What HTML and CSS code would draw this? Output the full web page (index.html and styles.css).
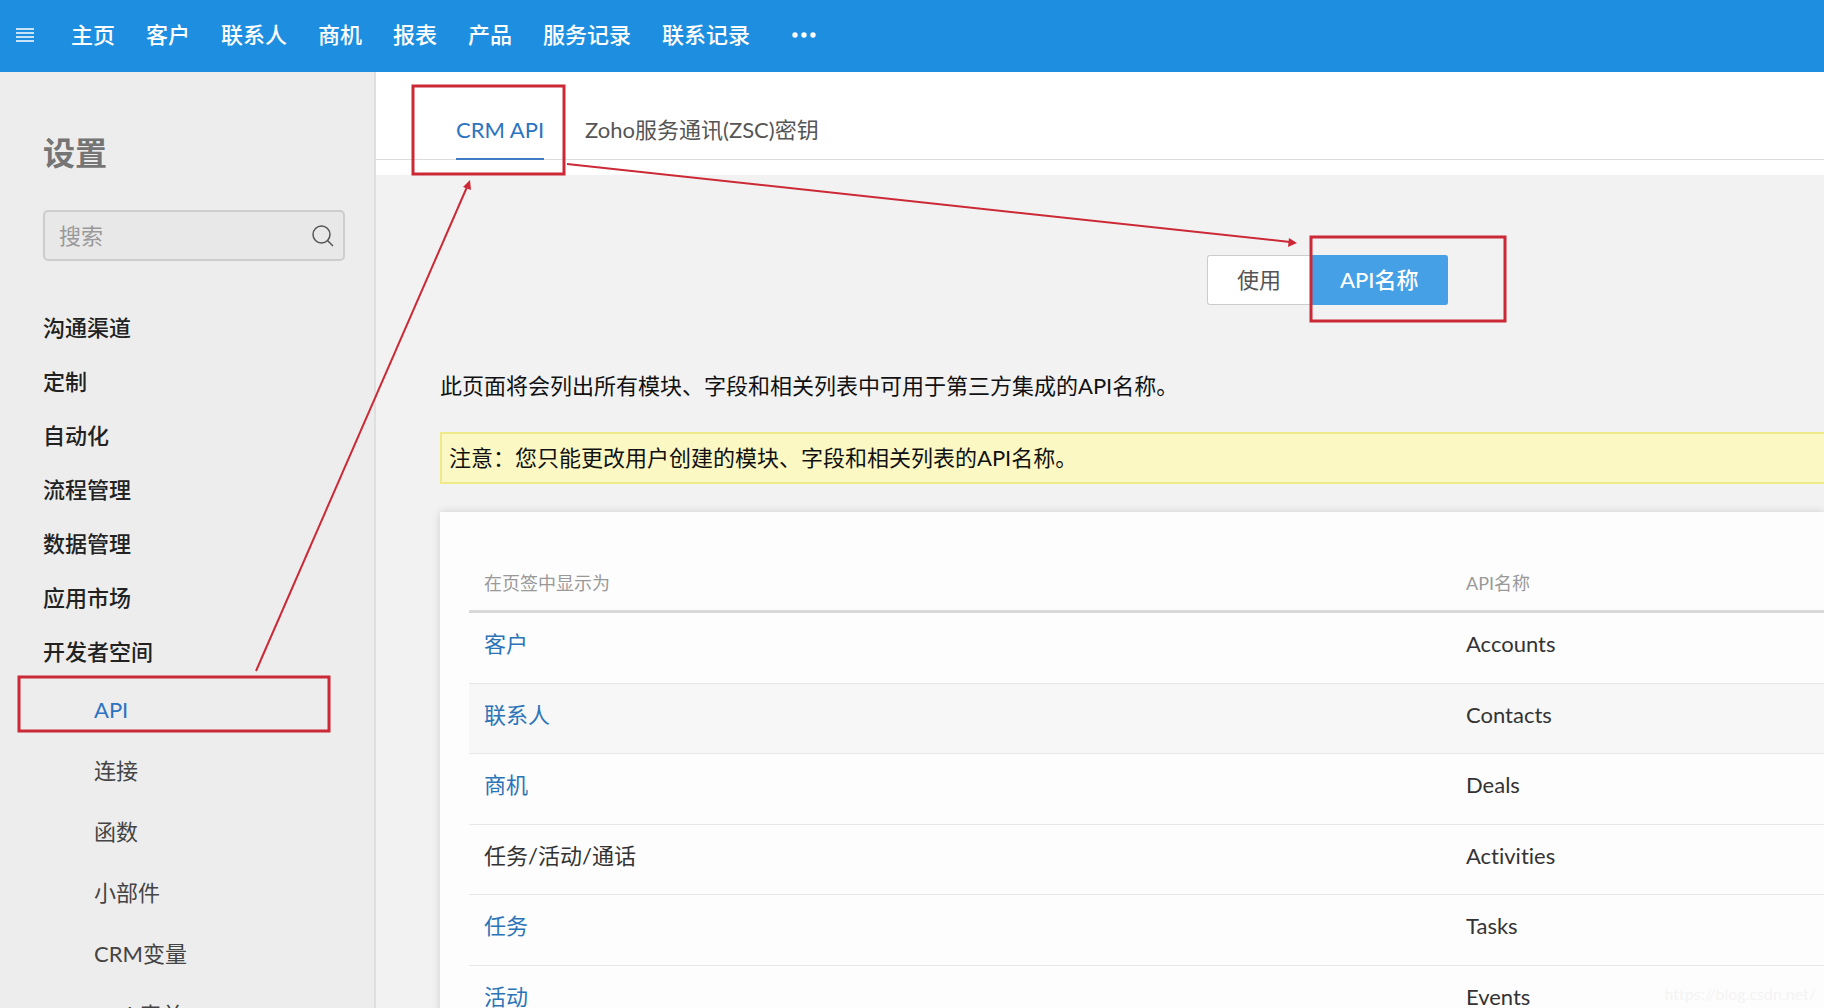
FILE: index.html
```html
<!DOCTYPE html>
<html lang="zh-CN">
<head>
<meta charset="utf-8">
<title>设置 - API名称</title>
<link rel="stylesheet" href="styles.css">
</head>
<body>
<header class="topbar">
  <button class="icon-btn" type="button" aria-label="菜单">
    <svg width="18" height="14" viewBox="0 0 18 14" stroke="currentColor" stroke-width="1.3"><path d="M0 1h18M0 5h18M0 9h18M0 13h18"/></svg>
  </button>
  <nav class="modules">
    <a href="#">主页</a>
    <a href="#">客户</a>
    <a href="#">联系人</a>
    <a href="#">商机</a>
    <a href="#">报表</a>
    <a href="#">产品</a>
    <a href="#">服务记录</a>
    <a href="#">联系记录</a>
  </nav>
  <button class="icon-btn more" type="button" aria-label="更多">
    <svg width="24" height="6" viewBox="0 0 24 6" fill="currentColor"><circle cx="3" cy="3" r="2.7"/><circle cx="12" cy="3" r="2.7"/><circle cx="21" cy="3" r="2.7"/></svg>
  </button>
</header>
<div class="layout">
  <aside class="sidebar">
    <h1>设置</h1>
    <div class="search">
      <input type="search" placeholder="搜索" aria-label="搜索">
      <svg width="22" height="22" viewBox="0 0 22 22" fill="none" stroke="#555" stroke-width="1.5"><circle cx="9.5" cy="9.5" r="8.5"/><path d="M15.5 15.5L21 21"/></svg>
    </div>
    <ul class="groups">
      <li><a href="#">沟通渠道</a></li>
      <li><a href="#">定制</a></li>
      <li><a href="#">自动化</a></li>
      <li><a href="#">流程管理</a></li>
      <li><a href="#">数据管理</a></li>
      <li><a href="#">应用市场</a></li>
      <li><a href="#">开发者空间</a>
        <ul class="subitems">
          <li><a class="current" href="#">API</a></li>
          <li><a href="#">连接</a></li>
          <li><a href="#">函数</a></li>
          <li><a href="#">小部件</a></li>
          <li><a href="#">CRM变量</a></li>
          <li><a href="#">Web表单</a></li>
        </ul>
      </li>
    </ul>
  </aside>
  <main class="main">
    <div class="tabs-area">
      <nav class="tabs">
        <a class="active" href="#">CRM API</a>
        <a href="#">Zoho服务通讯(ZSC)密钥</a>
      </nav>
    </div>
    <div class="content">
      <div class="toggle">
        <button type="button">使用</button>
        <button class="on" type="button">API名称</button>
      </div>
      <p class="intro">此页面将会列出所有模块、字段和相关列表中可用于第三方集成的API名称。</p>
      <p class="note">注意：您只能更改用户创建的模块、字段和相关列表的API名称。</p>
      <section class="card">
        <table>
          <thead>
            <tr><th class="col-label">在页签中显示为</th><th>API名称</th></tr>
          </thead>
          <tbody>
            <tr><td><a href="#">客户</a></td><td>Accounts</td></tr>
            <tr class="hovered"><td><a href="#">联系人</a></td><td>Contacts</td></tr>
            <tr><td><a href="#">商机</a></td><td>Deals</td></tr>
            <tr><td>任务/活动/通话</td><td>Activities</td></tr>
            <tr><td><a href="#">任务</a></td><td>Tasks</td></tr>
            <tr><td><a href="#">活动</a></td><td>Events</td></tr>
          </tbody>
        </table>
      </section>
    </div>
  </main>
</div>
<svg class="annotations" width="1600" height="800" viewBox="0 0 1600 800" fill="none" stroke="#cc2936" stroke-width="3" aria-hidden="true">
  <rect x="413" y="86" width="151" height="88"/>
  <rect x="19" y="677" width="310" height="54"/>
  <rect x="1311" y="237" width="194" height="84"/>
  <g stroke-width="2">
    <path d="M256 671L467 187"/>
    <path d="M567 164L1290 242"/>
  </g>
  <g fill="#cc2936" stroke="none">
    <path d="M470 180L471 190L463 187Z"/>
    <path d="M1297 243L1288 247L1289 238Z"/>
  </g>
</svg>
<span class="watermark">https://blog.csdn.net/</span>
</body>
</html>
```
FILE: styles.css
```css
* { box-sizing: border-box; }

body {
  margin: 0;
  height: 100vh;
  display: flex;
  flex-direction: column;
  overflow: hidden;
  position: relative;
  font-family: Lato, "Noto Sans CJK SC", sans-serif;
  font-size: 22px;
  font-variant-ligatures: none;
  line-height: 32px;
  color: #333;
  background: #f2f2f2;
}

a { color: inherit; text-decoration: none; }
ul { list-style: none; margin: 0; padding: 0; }
p { margin: 0; }
button { font: inherit; cursor: pointer; }

.topbar {
  flex: none;
  display: flex;
  align-items: center;
  height: 72px;
  padding: 0 16px 3px;
  background: #1e8fe0;
  color: #fff;
}

.icon-btn {
  display: flex;
  padding: 0;
  border: 0;
  background: none;
  color: #fff;
}

.modules {
  display: flex;
  gap: 31px;
  margin: 0 42px 0 37px;
  font-weight: 500;
}

.layout { flex: 1; display: flex; min-height: 0; }

.sidebar {
  flex: none;
  width: 376px;
  padding: 56px 29px 0 43px;
  overflow: hidden;
  background: #ededed;
  border-right: 2px solid #dfdfdf;
}

.sidebar h1 {
  margin: 0;
  font-size: 32px;
  line-height: 50px;
  font-weight: 700;
  color: #757575;
}

.search {
  display: flex;
  align-items: center;
  height: 51px;
  margin: 32px 0 40px;
  padding: 0 9px 0 14px;
  border: 2px solid #cdcdcd;
  border-radius: 5px;
  background: #e8e8e8;
}

.search input {
  flex: 1;
  min-width: 0;
  padding: 0;
  border: 0;
  outline: 0;
  background: none;
  font: inherit;
}

.search input::placeholder { color: #999; }

.groups { font-weight: 500; line-height: 54px; color: #222; }

.subitems {
  padding-left: 51px;
  font-weight: 400;
  line-height: 61px;
  color: #444;
}

.subitems .current { color: #2c74c0; }

.main { flex: 1; min-width: 0; overflow: hidden; }

.tabs-area { height: 103px; background: #fff; }

.tabs {
  display: flex;
  gap: 41px;
  height: 88px;
  padding: 0 80px;
  border-bottom: 1px solid #dcdcdc;
  color: #555;
}

.tabs a { height: 88px; padding-top: 42px; white-space: nowrap; }

.tabs .active { color: #2c74c0; border-bottom: 2px solid #3f7cc4; }

.content { padding: 80px 0 0 64px; }

.toggle { display: flex; margin-left: 767px; }

.toggle button {
  height: 50px;
  padding: 0 29px;
  border: 1px solid #ccc;
  border-right: 0;
  border-radius: 3px 0 0 3px;
  background: #fff;
  color: #555;
}

.toggle .on {
  border-color: #45a0e6;
  border-radius: 0 3px 3px 0;
  background: #45a0e6;
  color: #fff;
  font-weight: 500;
}

.intro { margin-top: 65px; color: #111; }

.note {
  margin-top: 30px;
  padding: 9px 7px;
  border: 2px solid #eeea8a;
  border-right: 0;
  background: #fbf8c4;
  line-height: 30px;
  color: #111;
}

.card {
  margin-top: 28px;
  padding: 40px 0 0 29px;
  background: #fdfdfd;
  box-shadow: 0 0 8px rgba(0, 0, 0, .14);
}

table { width: 100%; table-layout: fixed; border-collapse: separate; border-spacing: 0; }

.col-label { width: 982px; }

th, td { padding: 0 15px; text-align: left; vertical-align: top; }

th {
  height: 61px;
  padding-top: 15px;
  border-bottom: 3px solid #d9d9d9;
  font-size: 18px;
  font-weight: 400;
  color: #999;
}

td { height: 70px; padding-top: 15px; border-bottom: 1px solid #e8e8e8; }
tr:nth-child(odd) td { height: 71px; }
td a { color: #2c74b8; }
.hovered td { background: #f7f7f7; }

.annotations { position: absolute; top: 0; left: 0; pointer-events: none; }

.watermark {
  position: absolute;
  right: 8px;
  bottom: 0;
  font-size: 16px;
  line-height: 28px;
  color: #f4f4f4;
}
```
